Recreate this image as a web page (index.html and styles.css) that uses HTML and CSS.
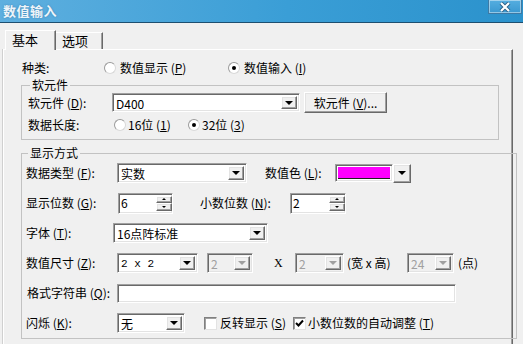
FILE: index.html
```html
<!DOCTYPE html>
<html lang="zh-CN">
<head>
  <meta charset="UTF-8">
  <title>数值输入</title>
  <link rel="stylesheet" href="styles.css">
</head>
<body>
<div class="window">
  <div class="titlebar">
    <span class="title">数值输入</span>
    <span class="close">
      <svg width="14" height="10" viewBox="0 0 14 10"><path d="M3 1 L11 9 M11 1 L3 9" stroke="#2a5f85" stroke-width="4"/><path d="M3 1 L11 9 M11 1 L3 9" stroke="#fff" stroke-width="2.2"/></svg>
    </span>
  </div>

  <div class="tabs">
    <div class="tab active">基本</div>
    <div class="tab">选项</div>
  </div>

  <div class="panel">
    <div class="row kind">
      <span class="lbl lbl-kind">种类:</span>
      <span class="radio"></span>
      <span class="opt opt-show">数值显示 (<u>P</u>)</span>
      <span class="radio checked"></span>
      <span class="opt">数值输入 (<u>I</u>)</span>
    </div>

    <fieldset class="group group-dev">
      <legend>软元件</legend>
      <div class="row dev-row">
        <span class="lbl lbl-dev">软元件 (<u>D</u>):</span>
        <div class="combo field combo-dev"><span class="val">D400</span><span class="drop raised"><i class="tri"></i></span></div>
        <button class="btn raised">软元件 (<u>V</u>)...</button>
      </div>
      <div class="row len-row">
        <span class="lbl lbl-dev">数据长度:</span>
        <span class="radio r-16"></span>
        <span class="opt opt-16">16位 (<u>1</u>)</span>
        <span class="radio checked"></span>
        <span class="opt">32位 (<u>3</u>)</span>
      </div>
    </fieldset>

    <fieldset class="group group-view">
      <legend>显示方式</legend>
      <div class="row vrow">
        <span class="lbl">数据类型 (<u>F</u>):</span>
        <div class="combo field w-type"><span class="val">实数</span><span class="drop raised"><i class="tri"></i></span></div>
        <span class="lbl lbl-color">数值色 (<u>L</u>):</span>
        <div class="swatch field"><span class="magenta"></span></div>
        <span class="drop raised color-drop"><i class="tri"></i></span>
      </div>
      <div class="row vrow">
        <span class="lbl">显示位数 (<u>G</u>):</span>
        <div class="spin field spin-digits"><span class="val">6</span><span class="spin-btns"><span class="raised sb"><i class="tri up"></i></span><span class="raised sb"><i class="tri small"></i></span></span></div>
        <span class="lbl lbl-dec">小数位数 (<u>N</u>):</span>
        <div class="spin field spin-dec"><span class="val">2</span><span class="spin-btns"><span class="raised sb"><i class="tri up"></i></span><span class="raised sb"><i class="tri small"></i></span></span></div>
      </div>
      <div class="row vrow">
        <span class="lbl lbl-font">字体 (<u>T</u>):</span>
        <div class="combo field w-font"><span class="val">16点阵标准</span><span class="drop raised"><i class="tri"></i></span></div>
      </div>
      <div class="row vrow">
        <span class="lbl">数值尺寸 (<u>Z</u>):</span>
        <div class="combo field w-size"><span class="val mono">2 x 2</span><span class="drop raised"><i class="tri"></i></span></div>
        <div class="combo field disabled w-d1"><span class="val">2</span><span class="drop raised"><i class="tri"></i></span></div>
        <span class="times">X</span>
        <div class="combo field disabled w-d2"><span class="val">2</span><span class="drop raised"><i class="tri"></i></span></div>
        <span class="unit">(宽 x 高)</span>
        <div class="combo field disabled w-d3"><span class="val">24</span><span class="drop raised"><i class="tri"></i></span></div>
        <span class="unit unit-pt">(点)</span>
      </div>
      <div class="row vrow">
        <span class="lbl lbl-fmt">格式字符串 (<u>Q</u>):</span>
        <div class="field text-fmt"></div>
      </div>
      <div class="row vrow">
        <span class="lbl">闪烁 (<u>K</u>):</span>
        <div class="combo field w-blink"><span class="val">无</span><span class="drop raised"><i class="tri"></i></span></div>
        <span class="check chk-rev"></span>
        <span class="opt opt-rev">反转显示 (<u>S</u>)</span>
        <span class="check checked"><svg width="9" height="9" viewBox="0 0 9 9"><path d="M1 4 L3.5 6.5 L8 1.5" stroke="#000" stroke-width="2" fill="none"/></svg></span>
        <span class="opt opt-auto">小数位数的自动调整 (<u>T</u>)</span>
      </div>
    </fieldset>
  </div>
</div>
</body>
</html>
```

FILE: styles.css
```css
body {
  margin: 0;
  padding: 0;
  font-family: "Noto Sans CJK SC", "Noto Sans", sans-serif;
  font-size: 12px;
  line-height: 14px;
  color: #000;
  background: #f0f0f0;
}
u {
  text-decoration: underline;
  text-underline-offset: 1px;
}
.window {
  width: 523px;
  height: 344px;
  overflow: hidden;
  background: #f0f0f0;
}
.titlebar {
  height: 22px;
  border-bottom: 1px solid #1d4f70;
  background: linear-gradient(to right, #5eafdf, #3a9ed6 55%, #2b92cc);
  display: flex;
  align-items: flex-start;
  justify-content: space-between;
}
.title {
  margin: 4px 0 0 3px;
  font-size: 13px;
  font-weight: bold;
  color: #eef5fa;
  text-shadow: 0 0 2px #3b7fae;
  letter-spacing: 0.5px;
}
.close {
  width: 32px;
  height: 13px;
  margin-right: 1px;
  border: 1px solid #3d7aa5;
  border-top: none;
  box-shadow: inset 0 0 0 1px rgba(255,255,255,0.45);
  background: linear-gradient(#55aee0, #3a98d0);
  display: flex;
  align-items: center;
  justify-content: center;
}

/* tabs */
.tabs {
  display: flex;
  align-items: flex-end;
  height: 26px;
  padding-left: 5px;
}
.tab {
  height: 16px;
  padding: 0 6px;
  background: #f0f0f0;
  border: 1px solid;
  border-color: #fff #696969 #f0f0f0 #fff;
  border-bottom: none;
  box-shadow: inset -1px 0 0 #a0a0a0;
  font-size: 13px;
  line-height: 16px;
}
.tab.active {
  height: 19px;
  width: 37px;
  position: relative;
  z-index: 1;
  margin-bottom: -1px;
  line-height: 17px;
}
.tab:not(.active) {
  width: 34px;
  margin-left: -1px;
}

.panel {
  width: 510px;
  height: 300px;
  margin-left: 3px;
  border: 1px solid;
  border-color: #fff #696969 #696969 #fff;
  box-shadow: inset -1px 0 0 #a0a0a0, -1px 0 0 #d0d0d0;
  padding-top: 10px;
  box-sizing: border-box;
}

.row {
  display: flex;
  align-items: center;
}
.lbl {
  flex: none;
  width: 91px;
  white-space: nowrap;
}
.kind {
  height: 16px;
  padding-left: 18px;
}
.lbl-kind {
  width: 82px;
}
.opt {
  white-space: nowrap;
  margin-left: 4px;
}
.opt-show {
  width: 108px;
}

/* radio / check */
.radio {
  flex: none;
  width: 10px;
  height: 10px;
  border-radius: 50%;
  border: 1px solid;
  border-color: #9a9a9a #d8d8d8 #d8d8d8 #9a9a9a;
  background: #fff;
  display: flex;
  align-items: center;
  justify-content: center;
}
.radio.checked::after {
  content: "";
  width: 4px;
  height: 4px;
  border-radius: 50%;
  background: #000;
}
.check {
  flex: none;
  width: 11px;
  height: 11px;
  background: #fff;
  border: 1px solid;
  border-color: #808080 #e3e3e3 #e3e3e3 #808080;
  box-shadow: inset 1px 1px 0 #a0a0a0;
  display: flex;
  align-items: center;
  justify-content: center;
}

/* groups */
.group {
  margin: 3px 0 0 17px;
  width: 478px;
  box-sizing: border-box;
  border: 1px solid #c2c2c2;
  padding: 0 0 3px 6px;
}
.group legend {
  padding: 0 2px;
  margin-left: 2px;
  line-height: 12px;
}
.dev-row {
  height: 21px;
  margin-top: 1px;
}
.len-row {
  height: 23px;
}
.lbl-dev {
  width: 84px;
}
.r-16 {
  margin-left: 2px;
}
.opt-16 {
  width: 60px;
}
.group-dev .opt {
  margin-left: 2px;
}

.group-view {
  margin-top: 7px;
  padding: 0 0 0 4px;
  height: 192px;
}
.vrow {
  height: 30px;
}
.vrow:first-of-type {
  margin-top: -1px;
}

/* 3D fields */
.field {
  background: #fff;
  border: 1px solid;
  border-color: #a0a0a0 #fff #fff #a0a0a0;
  box-shadow: inset 1px 1px 0 #696969, inset -1px -1px 0 #e3e3e3;
  box-sizing: border-box;
}
.raised {
  background: #f0f0f0;
  border: 1px solid;
  border-color: #fff #696969 #696969 #fff;
  box-shadow: inset -1px -1px 0 #a0a0a0, inset 1px 1px 0 #e3e3e3;
  box-sizing: border-box;
}
.combo {
  flex: none;
  height: 20px;
  display: flex;
  padding: 2px;
}
.combo .val {
  flex: 1;
  padding-left: 1px;
  line-height: 16px;
  white-space: nowrap;
}
.drop {
  flex: none;
  width: 16px;
  display: flex;
  align-items: center;
  justify-content: center;
}
.tri {
  width: 0;
  height: 0;
  border-left: 4px solid transparent;
  border-right: 4px solid transparent;
  border-top: 4px solid #000;
}
.tri.up {
  border-top: none;
  border-bottom: 2px solid #000;
  border-left-width: 2px;
  border-right-width: 2px;
}
.tri.small {
  border-top-width: 2px;
  border-left-width: 2px;
  border-right-width: 2px;
}
.disabled {
  background: #f0f0f0;
  color: #a0a0a0;
}
.disabled .tri {
  border-top-color: #a0a0a0;
}

.combo-dev {
  width: 188px;
  height: 19px;
}
.btn {
  margin-left: 4px;
  width: 83px;
  height: 21px;
  font: inherit;
  padding: 0;
  white-space: nowrap;
}

.w-type {
  width: 130px;
}
.lbl-color {
  width: 70px;
  margin-left: 18px;
}
.swatch {
  width: 58px;
  height: 18px;
  padding: 2px;
  display: flex;
}
.magenta {
  flex: 1;
  background: #ff00ff;
  border-bottom: 1px solid #202020;
}
.color-drop {
  height: 19px;
  width: 18px;
}

.spin {
  flex: none;
  height: 21px;
  display: flex;
  padding: 2px 0 2px 2px;
}
.spin .val {
  flex: 1;
  line-height: 14px;
}
.spin-btns {
  width: 16px;
  display: flex;
  flex-direction: column;
}
.sb {
  flex: 1;
  display: flex;
  align-items: center;
  justify-content: center;
}
.spin-digits {
  margin-left: 1px;
  width: 55px;
}
.lbl-dec {
  width: 90px;
  margin-left: 27px;
}
.spin-dec {
  width: 56px;
}

.lbl-font {
  width: 87px;
}
.w-font {
  width: 155px;
}

.w-size {
  width: 81px;
}
.mono {
  font-family: "Liberation Mono", monospace;
  font-size: 11px;
}
.w-d1 {
  width: 46px;
  margin-left: 9px;
}
.times {
  margin-left: 21px;
  width: 7px;
  font-family: "Liberation Serif", serif;
}
.w-d2 {
  width: 49px;
  margin-left: 14px;
}
.unit {
  width: 58px;
  margin-left: 3px;
  white-space: nowrap;
}
.w-d3 {
  width: 47px;
  margin-left: 2px;
}
.unit-pt {
  margin-left: 4px;
}

.lbl-fmt {
  width: 90px;
  margin-left: 1px;
}
.text-fmt {
  width: 339px;
  height: 19px;
}

.w-blink {
  width: 68px;
}
.chk-rev {
  margin-left: 19px;
}
.opt-rev {
  width: 73px;
  margin-left: 3px;
}
.opt-auto {
  margin-left: 2px;
}
```
